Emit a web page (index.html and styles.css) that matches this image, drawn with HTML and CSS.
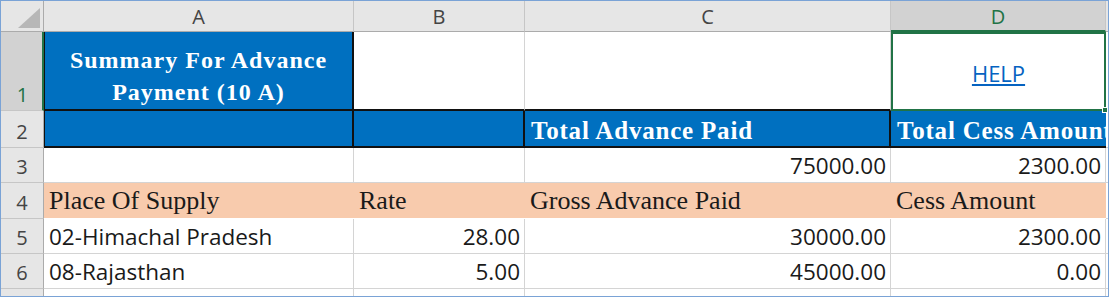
FILE: index.html
```html
<!DOCTYPE html>
<html>
<head>
<meta charset="utf-8">
<link rel="stylesheet" href="styles.css">
</head>
<body>
<div class="sheet">
  <div class="corner"><span class="tri"></span></div>
  <div class="ch">A</div>
  <div class="ch">B</div>
  <div class="ch">C</div>
  <div class="ch ch-sel">D</div>
  <div class="ch ch-rest"></div>

  <div class="rh rh-sel">1</div>
  <div class="c title-cell"><span>Summary For Advance<br>Payment (10 A)</span></div>
  <div class="c r1b"></div>
  <div class="c r1c"></div>
  <div class="c help-cell"><span class="help">HELP</span><span class="handle"></span></div>
  <div class="c rest"></div>

  <div class="rh">2</div>
  <div class="c blue b-left"></div>
  <div class="c blue"></div>
  <div class="c blue hdr">Total Advance Paid</div>
  <div class="c blue hdr clip">Total Cess Amount</div>
  <div class="c rest"></div>

  <div class="rh">3</div>
  <div class="c"></div>
  <div class="c"></div>
  <div class="c num">75000.00</div>
  <div class="c num">2300.00</div>
  <div class="c rest"></div>

  <div class="rh">4</div>
  <div class="c peach">Place Of Supply</div>
  <div class="c peach">Rate</div>
  <div class="c peach">Gross Advance Paid</div>
  <div class="c peach">Cess Amount</div>
  <div class="c rest"></div>

  <div class="rh">5</div>
  <div class="c txt">02-Himachal Pradesh</div>
  <div class="c num">28.00</div>
  <div class="c num">30000.00</div>
  <div class="c num">2300.00</div>
  <div class="c rest"></div>

  <div class="rh">6</div>
  <div class="c txt">08-Rajasthan</div>
  <div class="c num">5.00</div>
  <div class="c num">45000.00</div>
  <div class="c num">0.00</div>
  <div class="c rest"></div>

  <div class="rh rh-last"></div>
  <div class="c last"></div>
  <div class="c last"></div>
  <div class="c last"></div>
  <div class="c last"></div>
  <div class="c rest last"></div>
</div>
</body>
</html>
```

FILE: styles.css
```css
* { box-sizing: border-box; }
html, body { margin: 0; padding: 0; background: #ffffff; }

.sheet {
  width: 1109px;
  height: 297px;
  border: 1px solid #7aa3d6;
  display: grid;
  grid-template-columns: 43px 310px 171px 366px 215px 1fr;
  grid-template-rows: 31px 79px 37px 35px 36px 35px 35px 1fr;
  overflow: hidden;
  font-family: "Open Sans", "Liberation Sans", sans-serif;
  color: #1a1a1a;
}

.corner {
  background: #e6e6e6;
  border-right: 1px solid #ababab;
  border-bottom: 1px solid #ababab;
  position: relative;
}
.tri {
  position: absolute;
  right: 3px;
  bottom: 3px;
  width: 0;
  height: 0;
  border-left: 22px solid transparent;
  border-bottom: 20px solid #b7b7b7;
}

.ch {
  background: #e6e6e6;
  border-right: 1px solid #c6c6c6;
  border-bottom: 1px solid #ababab;
  display: flex;
  align-items: center;
  justify-content: center;
  font-size: 20px;
  color: #444444;
  padding-top: 1px;
}
.ch-sel {
  background: #d2d2d2;
  color: #217346;
  border-bottom: 2px solid #217346;
}
.ch-rest { border-right: none; }

.rh {
  background: #e6e6e6;
  border-right: 1px solid #ababab;
  border-bottom: 1px solid #c6c6c6;
  display: flex;
  align-items: flex-end;
  justify-content: center;
  font-size: 20px;
  color: #444444;
  padding-bottom: 1px;
  line-height: 28px;
}
.rh-sel {
  background: #d2d2d2;
  color: #217346;
  border-right: 2px solid #217346;
  padding-left: 2px;
}
.rh-last { border-bottom: none; }

.c {
  border-right: 1px solid #d4d4d4;
  border-bottom: 1px solid #d4d4d4;
  display: flex;
  align-items: flex-end;
  white-space: nowrap;
  overflow: hidden;
  padding: 0 4px 1px 5px;
  font-size: 22.5px;
  line-height: 30px;
}
.rest { border-right: none; }
.last { border-bottom: none; }

.title-cell {
  background: #0070c0;
  border-right: 2px solid #111111;
  border-bottom: 2px solid #111111;
  border-left: 1px solid #111111;
  justify-content: center;
  color: #ffffff;
  font-family: "Liberation Serif", serif;
  font-weight: bold;
  font-size: 24px;
  letter-spacing: 1px;
  line-height: 32px;
  text-align: center;
  padding: 0 0 1px 0;
}
.r1b, .r1c { border-bottom: 2px solid #111111; }

.help-cell {
  border: 2px solid #217346;
  justify-content: center;
  align-items: center;
  position: relative;
  overflow: visible;
  padding: 0;
}
.help {
  color: #0563c1;
  text-decoration: underline;
  font-size: 22px;
  padding-top: 2px;
}
.handle {
  position: absolute;
  right: -4px;
  bottom: -4px;
  width: 6px;
  height: 6px;
  background: #217346;
  border: 1px solid #ffffff;
}

.blue {
  background: #0070c0;
  border-right: 2px solid #111111;
  border-bottom: 2px solid #111111;
}
.b-left { border-left: 1px solid #111111; }
.hdr {
  color: #ffffff;
  font-family: "Liberation Serif", serif;
  font-weight: bold;
  font-size: 25px;
  letter-spacing: 0.8px;
  padding-left: 6px;
  padding-bottom: 0;
}
.clip { border-right: none; padding-right: 0; }

.peach {
  background: #f8cbad;
  border-right: none;
  border-bottom: 1px solid #ffffff;
  font-family: "Liberation Serif", serif;
  font-size: 26px;
  padding-bottom: 2px;
}

.num { justify-content: flex-end; }
```
